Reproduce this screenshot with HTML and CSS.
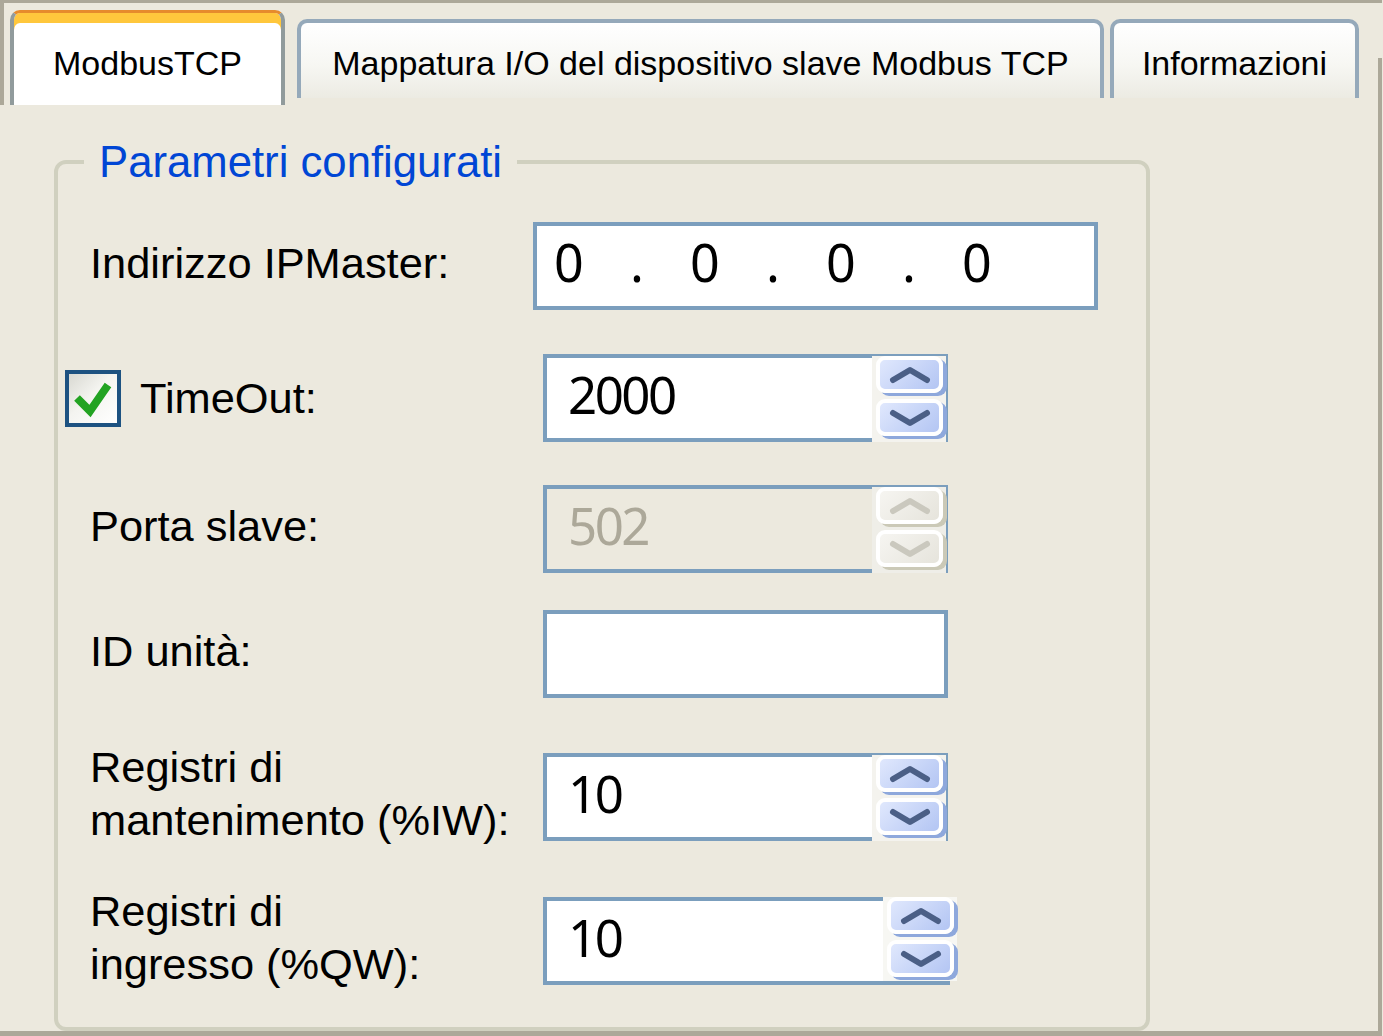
FILE: index.html
```html
<!DOCTYPE html>
<html lang="it">
<head>
<meta charset="utf-8">
<title>ModbusTCP</title>
<link rel="stylesheet" href="styles.css">
</head>
<body>
<div class="window">
  <div class="tabstrip">
    <div class="tab tab-active">ModbusTCP</div>
    <div class="tab tab-idle tab-mapping">Mappatura I/O del dispositivo slave Modbus TCP</div>
    <div class="tab tab-idle tab-info">Informazioni</div>
  </div>
  <div class="panel">
    <fieldset class="group">
      <legend class="group-title">Parametri configurati</legend>

      <div class="row row-ip">
        <div class="label">Indirizzo IPMaster:</div>
        <div class="field ip">
          <span class="oct">0</span><span class="dot">.</span>
          <span class="oct">0</span><span class="dot">.</span>
          <span class="oct">0</span><span class="dot">.</span>
          <span class="oct">0</span>
        </div>
      </div>

      <div class="row row-timeout">
        <div class="label label-check">
          <span class="checkbox">
            <svg width="48" height="49" viewBox="0 0 48 49"><polyline points="8,24 21,37 39,11" fill="none" stroke="#22a322" stroke-width="8" stroke-linejoin="miter"/></svg>
          </span>
          <span>TimeOut:</span>
        </div>
        <div class="field spin">
          <div class="spin-value">2000</div>
          <div class="spin-btns">
            <span class="spin-btn"><svg width="42" height="18" viewBox="0 0 42 18"><polyline points="4,14 21,4 38,14"/></svg></span>
            <span class="spin-btn"><svg width="42" height="18" viewBox="0 0 42 18"><polyline points="4,4 21,14 38,4"/></svg></span>
          </div>
        </div>
      </div>

      <div class="row row-port">
        <div class="label">Porta slave:</div>
        <div class="field spin spin-disabled">
          <div class="spin-value">502</div>
          <div class="spin-btns">
            <span class="spin-btn"><svg width="42" height="18" viewBox="0 0 42 18"><polyline points="4,14 21,4 38,14"/></svg></span>
            <span class="spin-btn"><svg width="42" height="18" viewBox="0 0 42 18"><polyline points="4,4 21,14 38,4"/></svg></span>
          </div>
        </div>
      </div>

      <div class="row row-unit">
        <div class="label">ID unità:</div>
        <div class="field plain"></div>
      </div>

      <div class="row row-hold">
        <div class="label label-multi">Registri di<br>mantenimento (%IW):</div>
        <div class="field spin">
          <div class="spin-value">10</div>
          <div class="spin-btns">
            <span class="spin-btn"><svg width="42" height="18" viewBox="0 0 42 18"><polyline points="4,14 21,4 38,14"/></svg></span>
            <span class="spin-btn"><svg width="42" height="18" viewBox="0 0 42 18"><polyline points="4,4 21,14 38,4"/></svg></span>
          </div>
        </div>
      </div>

      <div class="row row-input">
        <div class="label label-multi">Registri di<br>ingresso (%QW):</div>
        <div class="field spin spin-shifted">
          <div class="spin-value">10</div>
          <div class="spin-btns">
            <span class="spin-btn"><svg width="42" height="18" viewBox="0 0 42 18"><polyline points="4,14 21,4 38,14"/></svg></span>
            <span class="spin-btn"><svg width="42" height="18" viewBox="0 0 42 18"><polyline points="4,4 21,14 38,4"/></svg></span>
          </div>
        </div>
      </div>
    </fieldset>
  </div>
</div>
</body>
</html>
```
FILE: styles.css
```css
html, body {
  margin: 0;
  padding: 0;
}

body {
  width: 1383px;
  height: 1036px;
  overflow: hidden;
  background: #ece9de;
  font-family: "Liberation Sans", Arial, sans-serif;
  color: #000;
}

.window {
  width: 1383px;
  height: 1036px;
}

/* ---------- tabs ---------- */
.tabstrip {
  box-sizing: border-box;
  width: 1382px;
  height: 105px;
  border-top: 3px solid #aca899;
  border-left: 4px solid #aca899;
  padding-left: 6px;
  display: flex;
  align-items: flex-start;
  background: linear-gradient(#aca899, #aca899) no-repeat right bottom / 4px 47px;
}

.tab {
  box-sizing: border-box;
  display: flex;
  justify-content: center;
  align-items: center;
  font-size: 34px;
  white-space: nowrap;
  border-radius: 10px 10px 0 0;
}

.tab-active {
  width: 275px;
  height: 95px;
  margin-top: 7px;
  padding-top: 8px;
  background: #fff;
  border: 4px solid #919b9c;
  border-top: 3px solid #e68b2c;
  border-bottom: 0;
  box-shadow: inset 0 10px 0 #ffc73c;
}

.tab-idle {
  height: 79px;
  margin-top: 16px;
  padding-top: 5px;
  border: 4px solid #95a9ba;
  border-bottom: 0;
  background: linear-gradient(#ffffff, #f7f7f3 55%, #ecebe3);
}

.tab-mapping {
  width: 807px;
  margin-left: 12px;
}

.tab-info {
  width: 249px;
  margin-left: 6px;
}

/* ---------- panel ---------- */
.panel {
  box-sizing: border-box;
  width: 1382px;
  height: 931px;
  border-right: 4px solid #aca899;
  border-bottom: 5px solid #aca899;
  padding: 32px 0 0 54px;
  display: flex;
  flex-direction: column;
}

.group {
  box-sizing: border-box;
  flex: 1;
  width: 1096px;
  margin: 0;
  padding: 35px 0 0 7px;
  border: 4px solid #d0d0bf;
  border-radius: 12px;
  min-width: 0;
}

.group-title {
  margin-left: 19px;
  padding: 0 15px;
  font-size: 43.7px;
  line-height: 50px;
  color: #0046d5;
}

/* ---------- rows ---------- */
.row {
  display: flex;
  align-items: center;
  height: 88px;
}

.row-timeout { margin-top: 44px; }
.row-port    { margin-top: 43px; }
.row-unit    { margin-top: 37px; }
.row-hold    { margin-top: 55px; }
.row-input   { margin-top: 56px; }

.label {
  box-sizing: border-box;
  width: 468px;
  padding-left: 25px;
  padding-bottom: 6px;
  font-size: 43.4px;
  line-height: 50px;
  flex-shrink: 0;
}

.label-multi {
  line-height: 53px;
}

.label-check {
  padding-left: 0;
  padding-bottom: 0;
  display: flex;
  align-items: center;
  gap: 19px;
}

.checkbox {
  box-sizing: border-box;
  width: 56px;
  height: 57px;
  border: 4px solid #1d5281;
  background: linear-gradient(135deg, #d9d9d2, #f4f4f0 45%, #ffffff);
  display: flex;
}

/* ---------- fields ---------- */
.field {
  box-sizing: border-box;
  height: 88px;
  border: 4px solid #7b9ebd;
  background: #fff;
}

.plain {
  width: 405px;
  margin-left: 10px;
}

.ip {
  width: 565px;
  display: flex;
  align-items: center;
  padding-left: 17px;
  padding-bottom: 9px;
  font-family: "Noto Sans", "Open Sans", sans-serif;
  font-size: 52px;
}

.oct {
  width: 30px;
}

.dot {
  width: 106px;
  text-align: center;
}

.spin {
  width: 405px;
  margin-left: 10px;
  display: flex;
  border-right-width: 2px;
}

.spin-value {
  flex: 1;
  display: flex;
  align-items: center;
  padding-left: 21px;
  padding-bottom: 9px;
  font-family: "Noto Sans", "Open Sans", sans-serif;
  font-size: 51px;
  letter-spacing: -2.5px;
}

.spin-btns {
  box-sizing: border-box;
  width: 74px;
  margin: -2px 0 -4px 0;
  padding-left: 4px;
  background: #f4f3ee;
  display: flex;
  flex-direction: column;
  gap: 6px;
}

.spin-btn {
  box-sizing: border-box;
  width: 67px;
  height: 37px;
  border: 4px solid #fff;
  border-radius: 9px;
  background: linear-gradient(135deg, #e0e8fd, #b3c5f3);
  box-shadow: 4px 3px 0 #8ea8dc;
  display: flex;
  align-items: center;
  justify-content: center;
}

.spin-btn polyline {
  fill: none;
  stroke: #4b5f86;
  stroke-width: 6;
  stroke-linecap: round;
  stroke-linejoin: round;
}

.spin-disabled {
  background: #ece9de;
}

.spin-disabled .spin-value {
  color: #aca899;
}

.spin-disabled .spin-btns {
  background: #efeee8;
}

.spin-disabled .spin-btn {
  background: linear-gradient(135deg, #f6f5f1, #e6e4dc);
  box-shadow: 4px 3px 0 #cbc9b7;
}

.spin-disabled .spin-btn polyline {
  stroke: #cac8be;
}

.spin-shifted {
  width: 407px;
}

.spin-shifted .spin-btns {
  margin: -4px -9px 0 0;
  background: #f7f7f3;
}
```
